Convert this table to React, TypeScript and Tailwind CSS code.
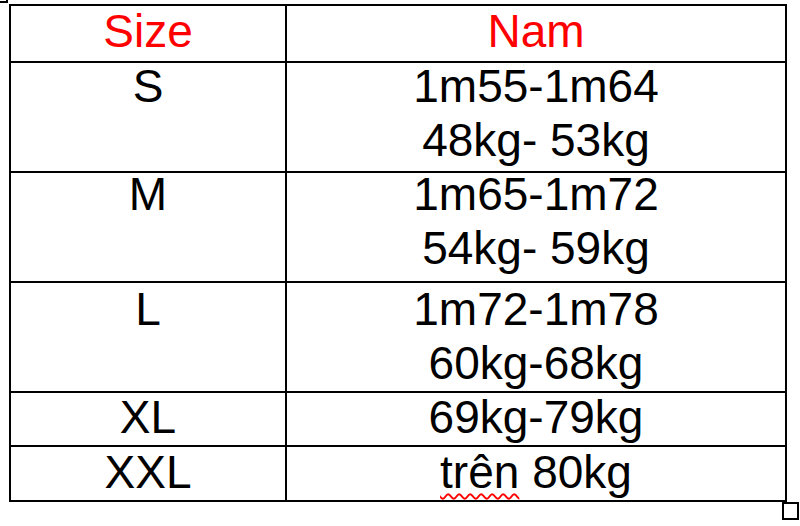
import React from "react";

type Row = {
  size: string;
  lines: React.ReactNode[];
  height: string;
  shift: string;
};

const rows: Row[] = [
  { size: "S", lines: ["1m55-1m64", "48kg- 53kg"], height: "h-[110px]", shift: "-mt-[4px]" },
  { size: "M", lines: ["1m65-1m72", "54kg- 59kg"], height: "h-[110px]", shift: "-mt-[6px]" },
  { size: "L", lines: ["1m72-1m78", "60kg-68kg"], height: "h-[110px]", shift: "-mt-[1px]" },
  { size: "XL", lines: ["69kg-79kg"], height: "h-[54px]", shift: "-mt-[3px]" },
  {
    size: "XXL",
    lines: [
      <>
        <span className="underline decoration-wavy decoration-[#ff0000] decoration-2 underline-offset-[5px]">
          trên
        </span>{" "}
        80kg
      </>,
    ],
    height: "h-[55px]",
    shift: "-mt-[2px]",
  },
];

const SizeTable: React.FC = () => {
  return (
    <div className="relative w-[778px] border-2 border-black">
      {/* word table handles */}
      <div className="absolute -left-[19px] -top-[18px] w-[16px] h-[15px] border-2 border-black bg-white" />
      <div className="absolute -right-[14px] -bottom-[20px] w-[17px] h-[18px] border-2 border-black bg-white" />

      <div className="grid grid-cols-[276px_1fr] h-[55px] text-[#ff0000]">
        <div className="flex flex-col items-center border-r-2 border-black">
          <span className="-mt-[2px]">Size</span>
        </div>
        <div className="flex flex-col items-center">
          <span className="-mt-[2px]">Nam</span>
        </div>
      </div>

      {rows.map((row) => (
        <div
          key={row.size}
          className={`grid grid-cols-[276px_1fr] border-t-2 border-black ${row.height}`}
        >
          <div className="flex flex-col items-center border-r-2 border-black">
            <span className={row.shift}>{row.size}</span>
          </div>
          <div className="flex flex-col items-center">
            <div className={`flex flex-col items-center ${row.shift}`}>
              {row.lines.map((line, i) => (
                <span key={i}>{line}</span>
              ))}
            </div>
          </div>
        </div>
      ))}
    </div>
  );
};

export default function App() {
  return (
    <div className="w-[800px] h-[526px] bg-white pl-[9px] pt-[4px] overflow-hidden font-['Liberation_Sans',Arial,sans-serif] text-[46px] leading-[54px] text-black">
      <SizeTable />
    </div>
  );
}
